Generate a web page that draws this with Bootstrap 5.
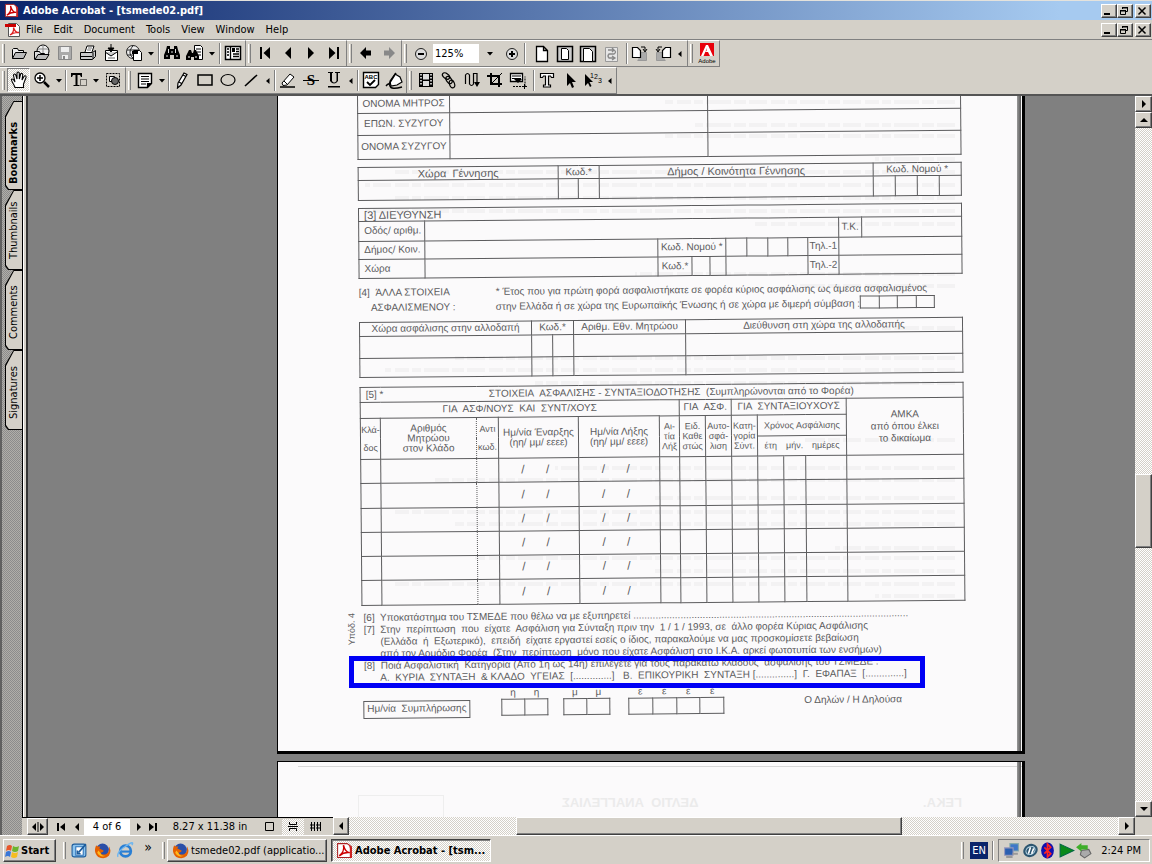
<!DOCTYPE html>
<html lang="en">
<head>
<meta charset="utf-8">
<meta name="viewport" content="width=device-width, initial-scale=1">
<title>Adobe Acrobat - [tsmede02.pdf]</title>
<link href="https://cdn.jsdelivr.net/npm/bootstrap@5.3.0/dist/css/bootstrap.min.css" rel="stylesheet">
<style>
:root{--face:#d4d0c8;--dark:#808080;--ink:#5c5c5e}
body{background:var(--face);color:#000;font:11px/14px "DejaVu Sans Condensed","DejaVu Sans",sans-serif;height:100vh;overflow:hidden;cursor:default}
button,input{font:inherit;color:inherit;border-radius:0}
button{background:none;border:0;padding:0}
svg{display:block;flex:none}
.ico{width:18px;height:18px}
.raised{background:var(--face);border:1px solid;border-color:#fff #404040 #404040 #fff;box-shadow:inset -1px -1px var(--dark)}
.checker{background:repeating-conic-gradient(#fff 0 25%,var(--face) 0 50%) 0 0/2px 2px}
.titlebar{flex:none;height:20px;background:linear-gradient(90deg,#0a246a,#a6caf0 92%);border-top:1px solid #e4e2dc;color:#fff;font-weight:bold}
.menubar{flex:none;height:20px;border-bottom:1px solid var(--dark)}
.menubar a{color:#000;text-decoration:none;margin-right:11px}
.winbtn{width:16px;height:14px}
.winbtn.close-btn{margin-left:2px;margin-right:-3px}
.toolrow{flex:none;height:27px}
.toolrow + .toolrow{height:29px;border-bottom:2px solid #555}
.toolrow + .toolrow .drop{width:11px}
.tgroup{border-right:1px solid var(--dark);border-bottom:1px solid var(--dark);border-top:1px solid #fff;padding-right:1px}
.grip{width:3px;margin:3px 2px 3px 2px;border-left:1px solid #fff;border-right:1px solid var(--dark)}
.sep{width:2px;margin:2px 0 2px 1px;border-left:1px solid var(--dark);border-right:1px solid #fff}
.tbtn{width:23px;height:24px;display:flex;align-items:center;justify-content:center}
.tbtn.pressed{border:1px solid;border-color:var(--dark) #fff #fff var(--dark)}
.drop{width:12px;display:flex;align-items:center;justify-content:center}
.drop.wide{width:20px}
.zoombox{width:46px;height:19px;border:0;background:#fff;padding:0 2px;margin:0 1px}
.navpane{width:22px;border-left:2px solid #606060;background:repeating-conic-gradient(#b0aea9 0 25%,#8c8c8c 0 50%) 0 0/2px 2px;padding:5px 0 0 3px}
.navtab{background:#000;position:relative;z-index:0;width:17px;height:80px;flex:none;writing-mode:vertical-rl;transform:rotate(180deg);clip-path:polygon(0 0,82% 0,100% 4px,100% calc(100% - 15px),50% 100%,0 100%);text-align:left;padding:11px 0 0 0;line-height:14px}
.navtab::before{content:"";position:absolute;inset:1px 1px 1px 0;background:var(--face);clip-path:inherit;z-index:-1}
.navtab.active{height:89px;font-weight:bold;padding-top:6px}
.splitter{width:6px;border-left:1px solid #000;border-right:2px solid #333;background:linear-gradient(90deg,#fff 1px,var(--face) 1px)}
.viewer{background:#808080;overflow:hidden}
.sheet{margin-left:22.5%;width:748px;border:solid #000;border-width:0 3px 3px 1px;background:#fbfafb;position:relative}
.sheet::after{content:"";position:absolute;top:0;bottom:0;right:1px;width:4px;background:linear-gradient(90deg,#999,#555)}
.bleed{position:absolute;left:80px;top:0}
.scan{margin-left:79px;width:605px;height:655px;transform:rotate(-.5deg);transform-origin:0 0;font:10px/15px "Liberation Sans",sans-serif;color:var(--ink);position:relative}
.scan table{width:604px;table-layout:fixed;border-collapse:collapse}
.scan td,.scan th{border:1px solid var(--ink);padding:0;font-weight:normal;text-align:center;line-height:10px;white-space:nowrap;overflow:visible}
.scan .lft{text-align:left;padding-left:5px}
.scan .big{font-size:11px}
.scan .date{font-size:12px;padding-right:7px}
.scan .tight{line-height:10px;font-size:9px}
.scan .two{line-height:18px;font-size:9px}
.scan .dotr{border-right:1px dotted var(--ink)}
.scan .dotl{border-left:1px dotted var(--ink)}
.notes{white-space:pre;line-height:12px}
.boxes td{height:16px}
.mark-box{position:absolute;left:71px;top:560px;width:576px;height:32px;border:5px solid #0000f5}
.margin-note{position:absolute;left:-15px;top:517px;writing-mode:vertical-rl;transform:rotate(180deg);font-size:9px;line-height:10px}
.ghost{color:#ebebeb;font:bold 13px/16px "Liberation Sans",sans-serif}
.flip{transform:scaleX(-1)}
.sbv{width:17px}
.sbtn{width:17px;height:16px;display:flex;align-items:center;justify-content:center}
.statusbar{height:18px}
.pagebox{width:46px;height:16px;border:0;background:#fff;padding:0;text-align:center}
.stbtn{width:22px;display:flex;align-items:center;justify-content:center}
.taskbar{flex:none;height:29px;border-top:1px solid #fff;padding:3px 2px 2px 3px}
.startbtn{width:53px;height:23px;padding-left:1px}
.taskbtn{width:160px;height:23px;padding:0 0 0 4px}
.taskbtn svg{margin-right:2px}
.taskbtn.sunk{border-color:#404040 #fff #fff #404040;box-shadow:inset 1px 1px var(--dark);background:repeating-conic-gradient(#fff 0 25%,var(--face) 0 50%) 0 0/2px 2px;font-weight:bold}
.tray{border:1px solid;border-color:var(--dark) #fff #fff var(--dark);height:23px}
.lang{background:#0a246a;color:#fff;width:18px;height:17px;line-height:17px}
</style>
</head>
<body class="d-flex flex-column">

<svg width="0" height="0" class="position-absolute" aria-hidden="true">
<defs>
<symbol id="pdf" viewBox="0 0 16 16"><path fill="#fff" stroke="#555" d="M3.5 1.5h8l3 3v10h-11z"/><path fill="#c00" d="M0 2h11v3H0z"/><path fill="none" stroke="#d22" stroke-width="1.3" d="M5 13c3-2 4-5 3.500-7.500C10 10 12 11 14 10.500 11 10 8 10.500 5 13"/></symbol>
<symbol id="acro" viewBox="0 0 16 16"><path fill="#fff" stroke="#a22" d="M1.500 1.500h9l4 3v10h-13z"/><path fill="#c22" d="M12 2l3 3v10h-2V6z"/><path fill="none" stroke="#c00" stroke-width="1.400" d="M3 13C6 11 8 7 7 3c1 4 3 7 6 7-4-.5-7 .5-10 3"/></symbol>
<symbol id="open" viewBox="0 0 18 18"><path fill="#eee" stroke="#000" d="M2.500 14.500v-9l1-1h4l1 2h5v2"/><path fill="#bbb" stroke="#000" d="M2.500 14.500l3-6h11l-3 6z"/></symbol>
<symbol id="openweb" viewBox="0 0 18 18"><circle cx="10" cy="7" r="6" fill="#eee" stroke="#000"/><path d="M5 5h10M10 1v12" stroke="#888"/><path fill="#ddd" stroke="#000" d="M1.500 15.500v-8h5l1 2h4v2"/><path fill="#bbb" stroke="#000" d="M2 15.500l3-5h11l-3 5z"/></symbol>
<symbol id="save" viewBox="0 0 18 18"><path fill="#aaa" stroke="#888" d="M2.500 2.500h13v13h-13z"/><path fill="#eee" d="M5 3h8v5H5zM6 11h6v4H6z"/><path fill="#888" d="M7 12h2v3H7z"/></symbol>
<symbol id="print" viewBox="0 0 18 18"><path fill="#fff" stroke="#000" d="M6 8l2-6h7l-2 6"/><path stroke="#777" d="M9 4h4M8 6h4"/><path fill="#ccc" stroke="#000" d="M1.500 8.500h12l3-2v6l-3 3h-12z"/><path stroke="#000" d="M2 12.500h11M14 9v6"/></symbol>
<symbol id="mail" viewBox="0 0 18 18"><path fill="#fff" stroke="#000" d="M3.500 6.500h12v10h-12z"/><path fill="#ccc" stroke="#000" d="M3 8l6 4 6-4"/><path d="M9 0v6M6 4l3 4 3-4z" stroke="#000"/><path stroke="#666" d="M6 14h7"/></symbol>
<symbol id="webpdf" viewBox="0 0 18 18"><circle cx="8" cy="8" r="6.500" fill="#eee" stroke="#222"/><path fill="none" stroke="#222" d="M2 6h12M2 11h8M8 2c-4 4-4 9 0 12"/><path fill="#fff" stroke="#000" d="M8.500 6.500h6l2 2v8h-8z"/><path d="M7 7h6v3H7z"/></symbol>
<symbol id="bino" viewBox="0 0 18 18"><path d="M4 2h3v3h4V2h3l1 4 2 5v4h-6v-4H7v4H1v-4l2-5z"/><path stroke="#ddd" d="M3 12h2M13 12h2M5.500 5v4M12.500 5v4M8 8h2"/></symbol>
<symbol id="binodoc" viewBox="0 0 18 18"><path fill="#fff" stroke="#000" d="M8.500 1.500h6l2 2v12h-8z"/><path stroke="#000" d="M10 5h5M11 8h4M12 11h3"/><path d="M3 6h2l1 3h1l1-3h2l3 6v4H8v-3H5v3H0v-4z"/><path stroke="#fff" d="M2 13h2M9 13h2"/></symbol>
<symbol id="navp" viewBox="0 0 18 18"><path fill="#fff" stroke="#000" stroke-width="1.500" d="M1.500 2.500h15v13h-15z"/><path stroke="#000" stroke-width="1.300" d="M6.500 3v12M3 5h2M3 8h2M3 11h2M9 10h6M9 12.500h6M12 5h3M12 7.500h3"/><path d="M8 4h3v4H8z"/></symbol>
<symbol id="first" viewBox="0 0 18 18"><path d="M4 3h2v12H4zM14 3v12L7.500 9z"/></symbol>
<symbol id="prev" viewBox="0 0 18 18"><path d="M12 3v12L6 9z"/></symbol>
<symbol id="next" viewBox="0 0 18 18"><path d="M6 3v12l6-6z"/></symbol>
<symbol id="last" viewBox="0 0 18 18"><path d="M4 3v12l6.500-6zM12 3h2v12h-2z"/></symbol>
<symbol id="back" viewBox="0 0 18 18"><path d="M3 9l6-6v3.500h5v5H9V15z"/></symbol>
<symbol id="minus" viewBox="0 0 18 18"><circle cx="9" cy="9" r="5.500" fill="#ddd" stroke="#222"/><path d="M6 8h6v2H6z"/></symbol>
<symbol id="plus" viewBox="0 0 18 18"><circle cx="9" cy="9" r="5.500" fill="#ddd" stroke="#222"/><path d="M6 8h6v2H6zM8 6h2v6H8z"/></symbol>
<symbol id="page1" viewBox="0 0 18 18"><path fill="#fff" stroke="#000" stroke-width="1.300" d="M3.500 1.500h7l4 4v11h-11zM10.500 1.500v4h4"/></symbol>
<symbol id="page2" viewBox="0 0 18 18"><path fill="#ccc" stroke="#000" stroke-width="1.500" d="M1.500 1.500h15v15h-15z"/><path fill="#fff" stroke="#000" d="M5.500 3.500h5l2 2v9h-7z"/></symbol>
<symbol id="page3" viewBox="0 0 18 18"><path fill="#ccc" stroke="#000" stroke-width="1.500" d="M1.500 1.500h15v15h-15z"/><path fill="#fff" stroke="#000" d="M4.500 3.500h6l3 3v10h-9z"/></symbol>
<symbol id="page4" viewBox="0 0 18 18"><path fill="#e6e6e6" stroke="#999" d="M3.500 2.500h12v14h-12z"/><path fill="none" stroke="#888" stroke-width="1.300" d="M6 5h6q3 2 0 4H7q-2 2 0 4h5M10 11l3 2-3 2M10 3l2 2-2 2"/></symbol>
<symbol id="rot" viewBox="0 0 18 18"><path fill="#aaa" stroke="#999" d="M9.500 7.500h6v8h-9"/><path fill="#fff" stroke="#000" stroke-width="1.200" d="M1.500 2.500h5l3 3v7h-8z"/><path fill="none" stroke="#000" d="M10 2h4v4M12 4l2 3 2-3"/></symbol>
<symbol id="adobe" viewBox="0 0 20 22"><path fill="#e8000b" d="M3 1h14v13H3z"/><path fill="#fff" d="M9 3h2l5 11h-3l-2-4H8l1.500-1L10 6l-3.500 8H4z"/><text x="10" y="21" text-anchor="middle" font-family="Liberation Sans" font-size="6">Adobe</text></symbol>
<symbol id="dn" viewBox="0 0 6 4"><path d="M0 0h6L3 3.500z"/></symbol>
<symbol id="lt" viewBox="0 0 4 6"><path d="M3.500 0v6L0 3z"/></symbol>
<symbol id="hand" viewBox="0 0 18 18"><path fill="#fff" stroke="#000" stroke-width="1.100" d="M5 16.500C4 13 1 10 1.500 8.500S4 9 5 11L3.500 4.500c0-2 2-2 2.500 0L7 8V2.500c0-2 2.200-2 2.300 0V8l1.200-4.500c.5-2 2.500-1 2.200.5L12 9l2-3.500c1-1.500 2.500-.5 2 1L13.500 13v3.500z"/></symbol>
<symbol id="zoomin" viewBox="0 0 18 18"><circle cx="7" cy="7" r="5" fill="#fff" stroke="#000" stroke-width="1.300"/><path stroke="#000" stroke-width="1.500" d="M4 7h6M7 4v6"/><path stroke="#000" stroke-width="2.500" d="M11 11l5 5"/></symbol>
<symbol id="tsel" viewBox="0 0 18 18"><path d="M1 2h11v4h-1l-1-2H7.500v10h2v1H3.500v-1h2V4H3L2 6H1z"/><path fill="none" stroke="#000" stroke-dasharray="1 1" d="M10.500 8.500h6v6h-6z"/></symbol>
<symbol id="snap" viewBox="0 0 18 18"><path fill="none" stroke="#000" stroke-dasharray="2 1" d="M2.500 2.500h13v13h-13z"/><path fill="#fff" stroke="#000" d="M5.500 5.500h5v5h-5z"/><circle cx="11" cy="10" r="3.500" fill="#666" stroke="#000"/></symbol>
<symbol id="note" viewBox="0 0 18 18"><path fill="#fff" stroke="#000" stroke-width="1.400" d="M2.500 2.500h13v10l-4 4h-9z"/><path stroke="#000" stroke-width="1.200" d="M5 5.500h8M5 8h8M5 10.500h8M5 13h5M11.500 16v-3.500h4"/></symbol>
<symbol id="pencil" viewBox="0 0 18 18"><path fill="#fff" stroke="#000" stroke-width="1.200" d="M5 12l6-10 3 1.500L8 14l-3.500 3zM6 11l2.500 1.500M10 4l3 1.500"/></symbol>
<symbol id="rect" viewBox="0 0 18 18"><path fill="none" stroke="#000" stroke-width="1.500" d="M2 4h14v10H2z"/></symbol>
<symbol id="oval" viewBox="0 0 18 18"><ellipse cx="9" cy="9" rx="7" ry="5.500" fill="none" stroke="#000" stroke-width="1.200"/></symbol>
<symbol id="line" viewBox="0 0 18 18"><path stroke="#000" stroke-width="1.600" d="M3 15L15 4"/></symbol>
<symbol id="high" viewBox="0 0 18 18"><path fill="#fff" stroke="#000" d="M3 12l8-9 4 3-7 8-4 .5zM5 10l3 3"/><path stroke="#000" stroke-width="1.500" d="M1 16h15"/></symbol>
<symbol id="strike" viewBox="0 0 18 18"><text x="9" y="14" text-anchor="middle" font-family="Liberation Serif" font-weight="bold" font-size="15">S</text><path stroke="#000" d="M1 9.500h16"/></symbol>
<symbol id="under" viewBox="0 0 18 18"><path d="M3 1h5v1H7v8q2 3 4.500 0V2H10V1h5v1h-2v8q-4 5-8 0V2H3zM3 15h12v1.500H3z"/></symbol>
<symbol id="abc" viewBox="0 0 18 18"><path fill="#fff" stroke="#000" stroke-width="1.400" d="M1.500 1.500h15v12l-3 3h-12z"/><text x="9" y="8" text-anchor="middle" font-family="Liberation Sans" font-weight="bold" font-size="6">ABC</text><path fill="none" stroke="#000" stroke-width="1.800" d="M5 11l3 3 5-5"/></symbol>
<symbol id="sign" viewBox="0 0 18 18"><path fill="#fff" stroke="#000" stroke-width="1.200" d="M5 10l5-7 5 3 2 5-5 3-6 1z"/><path fill="none" stroke="#000" stroke-width="1.400" d="M11 2L4 13M1 15q3-4 4 0t12 1"/></symbol>
<symbol id="film" viewBox="0 0 18 18"><path d="M2 2h14v14H2z"/><path fill="#ddd" d="M6 3h6v5.500H6zM6 10h6v5H6z"/><path stroke="#fff" stroke-width="1.500" stroke-dasharray="1.500 1.500" d="M4 3v12M14 3v12"/></symbol>
<symbol id="link" viewBox="0 0 18 18"><g fill="none" stroke="#000" stroke-width="1.200"><ellipse cx="6" cy="5" rx="4" ry="2.500" transform="rotate(35 6 5)"/><ellipse cx="9" cy="9" rx="4" ry="2.500" transform="rotate(55 9 9)"/><ellipse cx="12" cy="13" rx="4" ry="2.500" transform="rotate(70 12 13)"/></g></symbol>
<symbol id="art" viewBox="0 0 18 18"><path fill="none" stroke="#000" stroke-width="1.200" d="M2.500 13V4q2-3 4 0v9q2 3 4 0V2.500h3.500V12"/><path d="M11 11h6l-3 5z"/></symbol>
<symbol id="crop" viewBox="0 0 18 18"><path fill="none" stroke="#000" stroke-width="2" d="M5 2v11h11M1 5h12v11"/><path stroke="#000" d="M5 13L16 2"/></symbol>
<symbol id="formt" viewBox="0 0 18 18"><path fill="#fff" stroke="#000" stroke-width="1.300" d="M1.500 2.500h12v8h-12z"/><path stroke="#000" d="M3 5h9M3 7.500h9"/><path d="M5 8h8l-4 4z"/><path fill="none" stroke="#000" stroke-dasharray="2 1" d="M4 15.500h12v-10"/><path stroke="#000" d="M13 15.500h5M15.500 13v5"/></symbol>
<symbol id="ttool" viewBox="0 0 18 18"><path fill="#fff" stroke="#000" stroke-width="1.200" d="M2.500 2.500h13v4h-2l-1-1.500h-2v9h2v2h-7v-2h2V5h-2l-1 1.500h-2z"/></symbol>
<symbol id="arrow" viewBox="0 0 18 18"><path d="M6 2v13l3-3 2 5 2-1-2-5h4z"/></symbol>
<symbol id="a123" viewBox="0 0 18 18"><path d="M1 3v12l3-3 2 4 1.500-1-2-4H9z"/><text x="6" y="7" font-family="Liberation Sans" font-size="7">1</text><text x="10" y="8" font-family="Liberation Sans" font-size="7">2</text><text x="14" y="12" font-family="Liberation Sans" font-size="7">3</text></symbol>
<symbol id="min" viewBox="0 0 12 10"><path d="M2 7h6v2H2z"/></symbol>
<symbol id="rest" viewBox="0 0 12 10"><path fill="none" stroke="#000" d="M4.500 3V1.500h5v4H8M2.500 4.500h5v4h-5z"/><path d="M4 1h6v1.500H4zM2 4h6v1.500H2z"/></symbol>
<symbol id="cls" viewBox="0 0 12 10"><path stroke="#000" stroke-width="1.500" d="M2.500 1.500l7 7M9.500 1.500l-7 7"/></symbol>
<symbol id="win" viewBox="0 0 16 16"><path fill="#e8552a" d="M2 3q3-2 5 0L6 8Q4 6 1 8z"/><path fill="#6cb52d" d="M8 3q3 2 6 0l-1 5q-3 2-6 0z"/><path fill="#3a78d8" d="M1 9q3-2 5 0l-1 5q-2-2-5 0z"/><path fill="#f5bd1f" d="M7 9q3 2 6 0l-1 5q-3 2-6 0z"/></symbol>
<symbol id="ff" viewBox="0 0 16 16"><circle cx="8" cy="7.500" r="6" fill="#2b4fa8"/><path fill="#e66000" d="M2 3q-3 7 2 11 6 3 10-1 3-5 0-9 1 5-2 7-4 2-6-1 3 0 3-2l-4-2 1-2Q3 5 2 3"/><path fill="#ffb81c" d="M3 10q3 5 8 3-4 0-5-3l-2-2z"/></symbol>
<symbol id="ie" viewBox="0 0 16 16"><circle cx="8" cy="8.500" r="5" fill="none" stroke="#2a7fd4" stroke-width="2.600"/><path stroke="#2a7fd4" stroke-width="2" d="M4 9h9"/><path fill="none" stroke="#6fb6f0" stroke-width="1.300" d="M1 14Q-1 10 8 4t6-1"/></symbol>
<symbol id="desk" viewBox="0 0 16 16"><rect x="1" y="2" width="13" height="12" rx="2" fill="#8cc4ee" stroke="#1c5c9c"/><path fill="#fff" stroke="#2a70b8" d="M4.500 4.500h7v8h-7z"/><path stroke="#1c5c9c" stroke-width="1.500" d="M7 10l7-8M6 8v3h3" fill="none"/></symbol>
<symbol id="net" viewBox="0 0 16 16"><path fill="#3f78c8" stroke="#8aa" d="M6.500 1.500h8v7h-8z"/><path fill="#2b5fb0" stroke="#99b" d="M1.500 5.500h8v7h-8z"/><path fill="#999" d="M3 13h6v2H3zM9 10h5v2H9z"/></symbol>
<symbol id="quick" viewBox="0 0 16 16"><ellipse cx="8" cy="8" rx="7" ry="6" fill="#2d5670" transform="rotate(-30 8 8)"/><ellipse cx="8" cy="8" rx="4.500" ry="3.500" fill="none" stroke="#b8d8e8" transform="rotate(-30 8 8)"/><path stroke="#fff" stroke-width="1.500" d="M6 11l2-6M9 11l2-5"/></symbol>
<symbol id="bt" viewBox="0 0 16 16"><ellipse cx="8" cy="8" rx="6" ry="7.500" fill="#1010b0"/><path fill="none" stroke="#f22" stroke-width="1.600" d="M5 5l6 6-3 3V2l3 3-6 6"/></symbol>
<symbol id="play" viewBox="0 0 16 16"><path fill="#0a8a1a" stroke="#064" d="M2 2l13 6-13 6z"/></symbol>
<symbol id="eject" viewBox="0 0 16 16"><path fill="#aaa" stroke="#666" d="M6 8l7-1 2 4-6 4-4-3z"/><path fill="#3fae2a" d="M1 5l5-4v2h6v4H6v2z"/></symbol>
</defs>
</svg>

<header class="titlebar d-flex align-items-center px-1">
  <svg width="15" height="15"><use href="#acro"/></svg>
  <span class="ms-1 flex-grow-1 text-nowrap">Adobe Acrobat - [tsmede02.pdf]</span>
  <button class="winbtn raised" aria-label="Minimize"><svg width="12" height="10"><use href="#min"/></svg></button>
  <button class="winbtn raised" aria-label="Restore"><svg width="12" height="10"><use href="#rest"/></svg></button>
  <button class="winbtn close-btn raised" aria-label="Close"><svg width="12" height="10"><use href="#cls"/></svg></button>
</header>

<nav class="menubar d-flex align-items-center px-1" aria-label="Menu">
  <svg width="18" height="16"><use href="#pdf"/></svg>
  <div class="d-flex flex-grow-1 ms-1"><a href="#">File</a><a href="#">Edit</a><a href="#">Document</a><a href="#">Tools</a><a href="#">View</a><a href="#">Window</a><a href="#">Help</a></div>
  <button class="winbtn raised" aria-label="Minimize document"><svg width="12" height="10"><use href="#min"/></svg></button>
  <button class="winbtn raised" aria-label="Restore document"><svg width="12" height="10"><use href="#rest"/></svg></button>
  <button class="winbtn close-btn raised" aria-label="Close document"><svg width="12" height="10"><use href="#cls"/></svg></button>
</nav>

<div class="toolrow d-flex" role="toolbar" aria-label="File and view">
  <div class="tgroup d-flex"><span class="grip"></span>
    <button class="tbtn" aria-label="Open"><svg class="ico"><use href="#open"/></svg></button>
    <button class="tbtn" aria-label="Open web page"><svg class="ico"><use href="#openweb"/></svg></button>
    <button class="tbtn" aria-label="Save" disabled><svg class="ico"><use href="#save"/></svg></button>
    <button class="tbtn" aria-label="Print"><svg class="ico"><use href="#print"/></svg></button>
    <button class="tbtn" aria-label="E-mail"><svg class="ico"><use href="#mail"/></svg></button>
    <button class="tbtn" aria-label="Convert"><svg class="ico"><use href="#webpdf"/></svg></button>
    <button class="drop" aria-label="More convert"><svg width="6" height="4"><use href="#dn"/></svg></button>
    <span class="sep"></span>
    <button class="tbtn" aria-label="Find"><svg class="ico"><use href="#bino"/></svg></button>
    <button class="tbtn" aria-label="Search"><svg class="ico"><use href="#binodoc"/></svg></button>
    <button class="drop" aria-label="More search"><svg width="6" height="4"><use href="#dn"/></svg></button>
    <span class="sep"></span>
    <button class="tbtn" aria-label="Navigation pane"><svg class="ico"><use href="#navp"/></svg></button>
  </div>
  <div class="tgroup d-flex"><span class="grip"></span>
    <button class="tbtn" aria-label="First page"><svg class="ico"><use href="#first"/></svg></button>
    <button class="tbtn" aria-label="Previous page"><svg class="ico"><use href="#prev"/></svg></button>
    <button class="tbtn" aria-label="Next page"><svg class="ico"><use href="#next"/></svg></button>
    <button class="tbtn" aria-label="Last page"><svg class="ico"><use href="#last"/></svg></button>
  </div>
  <div class="tgroup d-flex"><span class="grip"></span>
    <button class="tbtn" aria-label="Previous view"><svg class="ico"><use href="#back"/></svg></button>
    <button class="tbtn" aria-label="Next view" disabled><svg class="ico flip" fill="#888"><use href="#back"/></svg></button>
  </div>
  <div class="tgroup d-flex align-items-center"><span class="grip align-self-stretch"></span>
    <button class="tbtn" aria-label="Zoom out"><svg class="ico"><use href="#minus"/></svg></button>
    <input class="zoombox" type="text" value="125%" aria-label="Zoom">
    <button class="drop wide" aria-label="Zoom levels"><svg width="6" height="4"><use href="#dn"/></svg></button>
    <button class="tbtn" aria-label="Zoom in"><svg class="ico"><use href="#plus"/></svg></button>
    <span class="sep align-self-stretch me-1"></span>
    <button class="tbtn" aria-label="Actual size"><svg class="ico"><use href="#page1"/></svg></button>
    <button class="tbtn" aria-label="Fit in window"><svg class="ico"><use href="#page2"/></svg></button>
    <button class="tbtn" aria-label="Fit width"><svg class="ico"><use href="#page3"/></svg></button>
    <button class="tbtn" aria-label="Reflow" disabled><svg class="ico"><use href="#page4"/></svg></button>
    <span class="sep align-self-stretch ms-1"></span>
    <button class="tbtn" aria-label="Rotate clockwise"><svg class="ico"><use href="#rot"/></svg></button>
    <button class="tbtn" aria-label="Rotate counterclockwise"><svg class="ico flip"><use href="#rot"/></svg></button>
    <button class="drop" aria-label="Collapse view tools"><svg width="4" height="6"><use href="#lt"/></svg></button>
  </div>
  <div class="tgroup d-flex"><span class="grip"></span>
    <button class="tbtn" aria-label="Adobe on the Web"><svg width="20" height="22"><use href="#adobe"/></svg></button>
  </div>
</div>

<div class="toolrow d-flex" role="toolbar" aria-label="Editing">
  <div class="tgroup d-flex"><span class="grip"></span>
    <button class="tbtn pressed checker" aria-label="Hand"><svg class="ico"><use href="#hand"/></svg></button>
    <button class="tbtn" aria-label="Zoom"><svg class="ico"><use href="#zoomin"/></svg></button>
    <button class="drop" aria-label="More zoom"><svg width="6" height="4"><use href="#dn"/></svg></button>
    <span class="sep"></span>
    <button class="tbtn" aria-label="Select text"><svg class="ico"><use href="#tsel"/></svg></button>
    <button class="drop" aria-label="More select"><svg width="6" height="4"><use href="#dn"/></svg></button>
    <button class="tbtn" aria-label="Select graphic"><svg class="ico"><use href="#snap"/></svg></button>
  </div>
  <div class="tgroup d-flex"><span class="grip"></span>
    <button class="tbtn" aria-label="Note"><svg class="ico"><use href="#note"/></svg></button>
    <button class="drop" aria-label="More notes"><svg width="6" height="4"><use href="#dn"/></svg></button>
    <span class="sep"></span>
    <button class="tbtn" aria-label="Pencil"><svg class="ico"><use href="#pencil"/></svg></button>
    <button class="tbtn" aria-label="Square"><svg class="ico"><use href="#rect"/></svg></button>
    <button class="tbtn" aria-label="Circle"><svg class="ico"><use href="#oval"/></svg></button>
    <button class="tbtn" aria-label="Line"><svg class="ico"><use href="#line"/></svg></button>
    <button class="drop" aria-label="Collapse shapes"><svg width="4" height="6"><use href="#lt"/></svg></button>
    <span class="sep"></span>
    <button class="tbtn" aria-label="Highlight"><svg class="ico"><use href="#high"/></svg></button>
    <button class="tbtn" aria-label="Strikeout"><svg class="ico"><use href="#strike"/></svg></button>
    <button class="tbtn" aria-label="Underline"><svg class="ico"><use href="#under"/></svg></button>
    <button class="drop" aria-label="Collapse markup"><svg width="4" height="6"><use href="#lt"/></svg></button>
    <span class="sep"></span>
    <button class="tbtn" aria-label="Spell check"><svg class="ico"><use href="#abc"/></svg></button>
    <button class="tbtn" aria-label="Sign"><svg class="ico"><use href="#sign"/></svg></button>
  </div>
  <div class="tgroup d-flex"><span class="grip"></span>
    <button class="tbtn" aria-label="Movie"><svg class="ico"><use href="#film"/></svg></button>
    <button class="tbtn" aria-label="Link"><svg class="ico"><use href="#link"/></svg></button>
    <button class="tbtn" aria-label="Article"><svg class="ico"><use href="#art"/></svg></button>
    <button class="tbtn" aria-label="Crop"><svg class="ico"><use href="#crop"/></svg></button>
    <button class="tbtn" aria-label="Form"><svg class="ico"><use href="#formt"/></svg></button>
    <span class="sep ms-1"></span>
    <button class="tbtn" aria-label="TouchUp text"><svg class="ico"><use href="#ttool"/></svg></button>
    <button class="tbtn" aria-label="TouchUp object"><svg class="ico"><use href="#arrow"/></svg></button>
    <button class="tbtn" aria-label="TouchUp order"><svg class="ico"><use href="#a123"/></svg></button>
    <button class="drop" aria-label="Collapse TouchUp"><svg width="4" height="6"><use href="#lt"/></svg></button>
  </div>
</div>

<main class="d-flex flex-grow-1" style="min-height:0">
  <div class="navpane d-flex flex-column">
    <button class="navtab active">Bookmarks</button>
    <button class="navtab">Thumbnails</button>
    <button class="navtab">Comments</button>
    <button class="navtab">Signatures</button>
  </div>
  <div class="d-flex flex-column flex-grow-1" style="min-width:0">
    <div class="d-flex flex-grow-1" style="min-height:0">
      <div class="splitter"></div>
      <div class="viewer flex-grow-1">
        <section class="sheet">
          <svg class="bleed flip" width="605" height="600" stroke="#f3f2f3" stroke-width="4" stroke-dasharray="18 3 12 3 25 3 9 3 14 4" aria-hidden="true">
            <path d="M8 6h290M8 29h260M8 40h290M8 63h80M8 76h560M8 89h590M8 102h560M8 115h590M8 128h200M8 178h320M8 190h160M8 232h90M8 262h500M8 274h570M8 287h420M8 344h150M8 372h400M8 384h520M8 402h300M8 416h560M8 428h500M8 452h120M8 462h480M8 475h300M8 488h560M8 500h80" fill="none"/>
          </svg>
          <div class="scan">
            <table>
              <colgroup><col style="width:92px"><col style="width:258px"><col></colgroup>
              <tr style="height:17px"><td class="border-top-0">ΟΝΟΜΑ ΜΗΤΡΟΣ</td><td class="border-top-0"></td><td class="border-top-0"></td></tr>
              <tr style="height:22px"><td>ΕΠΩΝ. ΣΥΖΥΓΟΥ</td><td></td><td></td></tr>
              <tr style="height:24px"><td>ΟΝΟΜΑ ΣΥΖΥΓΟΥ</td><td></td><td></td></tr>
            </table>
            <table style="margin-top:7px">
              <colgroup><col style="width:200px"><col style="width:20px"><col style="width:21px"><col style="width:274px"><col style="width:22px"><col style="width:22px"><col style="width:22px"><col></colgroup>
              <tr style="height:13px"><th class="big">Χώρα &nbsp;Γέννησης</th><th colspan="2">Κωδ.*</th><th class="big">Δήμος / Κοινότητα Γέννησης</th><th colspan="4">Κωδ. Νομού *</th></tr>
              <tr style="height:20px"><td></td><td></td><td></td><td></td><td></td><td></td><td></td><td></td></tr>
            </table>
            <table style="margin-top:7px">
              <colgroup><col style="width:66px"><col style="width:233px"><col style="width:34px"><col style="width:18px"><col style="width:16px"><col style="width:21px"><col style="width:21px"><col style="width:20px"><col style="width:20px"><col style="width:31px"><col style="width:23px"><col></colgroup>
              <tr style="height:13px"><th colspan="12" class="lft big">[3] ΔΙΕΥΘΥΝΣΗ</th></tr>
              <tr style="height:20px"><td class="lft">Οδός/ αριθμ.</td><td colspan="9"></td><td>Τ.Κ.</td><td></td></tr>
              <tr style="height:18px"><td class="lft">Δήμος/ Κοιν.</td><td></td><td colspan="3">Κωδ. Νομού *</td><td></td><td></td><td></td><td></td><td>Τηλ.-1</td><td colspan="2"></td></tr>
              <tr style="height:19px"><td class="lft">Χώρα</td><td></td><td>Κωδ.*</td><td></td><td></td><td colspan="4"></td><td>Τηλ.-2</td><td colspan="2"></td></tr>
            </table>
            <div class="d-flex" style="margin-top:6px">
              <div style="width:137px">[4] &nbsp;ΆΛΛΑ ΣΤΟΙΧΕΙΑ<br><span class="ms-2 ps-1">ΑΣΦΑΛΙΣΜΕΝΟΥ :</span></div>
              <div class="text-nowrap">* Έτος που για πρώτη φορά ασφαλιστήκατε σε φορέα κύριος ασφάλισης ως άμεσα ασφαλισμένος<br>
                <div class="d-flex">στην Ελλάδα ή σε χώρα της Ευρωπαϊκής Ένωσης ή σε χώρα με διμερή σύμβαση :
                  <table style="width:75px;height:13px"><tr><td></td><td></td><td></td><td></td></tr></table></div></div>
            </div>
            <table style="margin-top:7px">
              <colgroup><col style="width:172px"><col style="width:21px"><col style="width:21px"><col style="width:112px"><col></colgroup>
              <tr style="height:14px"><th>Χώρα ασφάλισης στην αλλοδαπή</th><th colspan="2">Κωδ.*</th><th>Αριθμ. Εθν. Μητρώου</th><th>Διεύθυνση στη χώρα της αλλοδαπής</th></tr>
              <tr style="height:22px"><td></td><td></td><td></td><td></td><td></td></tr>
              <tr style="height:19px"><td></td><td></td><td></td><td></td><td></td></tr>
            </table>
            <table style="margin-top:9px">
              <colgroup><col style="width:20px"><col style="width:96px"><col style="width:22px"><col style="width:80px"><col style="width:81px"><col style="width:20px"><col style="width:26px"><col style="width:26px"><col style="width:26px"><col style="width:26px"><col style="width:22px"><col style="width:41px"><col></colgroup>
              <tr style="height:15px"><th class="lft border-end-0">[5] *</th><th colspan="12" class="border-start-0">ΣΤΟΙΧΕΙΑ &nbsp;ΑΣΦΑΛΙΣΗΣ - ΣΥΝΤΑΞΙΟΔΟΤΗΣΗΣ &nbsp;(Συμπληρώνονται από το Φορέα)</th></tr>
              <tr style="height:16px"><th colspan="6">ΓΙΑ &nbsp;ΑΣΦ/ΝΟΥΣ &nbsp;ΚΑΙ &nbsp;ΣΥΝΤ/ΧΟΥΣ</th><th colspan="2">ΓΙΑ &nbsp;ΑΣΦ.</th><th colspan="4">ΓΙΑ &nbsp;ΣΥΝΤΑΞΙΟΥΧΟΥΣ</th><th rowspan="3" style="line-height:12px">ΑΜΚΑ<br>από όπου έλκει<br>το δικαίωμα</th></tr>
              <tr style="height:21px"><th rowspan="2" class="two">Κλά-<br>δος</th><th rowspan="2" class="dotr">Αριθμός<br>Μητρώου<br>στον Κλάδο</th><th rowspan="2" class="two dotl">Αντι<br>κωδ.</th><th rowspan="2">Ημ/νία Έναρξης<br>(ηη/ μμ/ εεεε)</th><th rowspan="2">Ημ/νία Λήξης<br>(ηη/ μμ/ εεεε)</th><th rowspan="2" class="tight">Αι-<br>τία<br>Λήξ</th><th rowspan="2" class="tight">Ειδ.<br>Καθε<br>στώς</th><th rowspan="2" class="tight">Αυτο-<br>σφά-<br>λιση</th><th rowspan="2" class="tight">Κατη-<br>γορία<br>Σύντ.</th><th colspan="3" class="tight">Χρόνος Ασφάλισης</th></tr>
              <tr style="height:20px"><th class="tight border-end-0">έτη</th><th class="tight border-start-0 border-end-0">μήν.</th><th class="tight border-start-0">ημέρες</th></tr>
              <tr style="height:24px"><td></td><td class="dotr"></td><td class="dotl"></td><td class="date">/ &emsp;&ensp;/</td><td class="date">/ &emsp;&ensp;/</td><td></td><td></td><td></td><td></td><td></td><td></td><td></td><td></td></tr>
              <tr style="height:25px"><td></td><td class="dotr"></td><td class="dotl"></td><td class="date">/ &emsp;&ensp;/</td><td class="date">/ &emsp;&ensp;/</td><td></td><td></td><td></td><td></td><td></td><td></td><td></td><td></td></tr>
              <tr style="height:24px"><td></td><td class="dotr"></td><td class="dotl"></td><td class="date">/ &emsp;&ensp;/</td><td class="date">/ &emsp;&ensp;/</td><td></td><td></td><td></td><td></td><td></td><td></td><td></td><td></td></tr>
              <tr style="height:24px"><td></td><td class="dotr"></td><td class="dotl"></td><td class="date">/ &emsp;&ensp;/</td><td class="date">/ &emsp;&ensp;/</td><td></td><td></td><td></td><td></td><td></td><td></td><td></td><td></td></tr>
              <tr style="height:24px"><td></td><td class="dotr"></td><td class="dotl"></td><td class="date">/ &emsp;&ensp;/</td><td class="date">/ &emsp;&ensp;/</td><td></td><td></td><td></td><td></td><td></td><td></td><td></td><td></td></tr>
              <tr style="height:25px"><td></td><td class="dotr"></td><td class="dotl"></td><td class="date">/ &emsp;&ensp;/</td><td class="date">/ &emsp;&ensp;/</td><td></td><td></td><td></td><td></td><td></td><td></td><td></td><td></td></tr>
            </table>
            <div class="notes" style="margin:6px 0 0 2px">[6]  Υποκατάστημα του ΤΣΜΕΔΕ που θέλω να με εξυπηρετεί ...................................................................................................
[7]  Στην  περίπτωση  που  είχατε  Ασφάλιση για Σύνταξη πριν την  1 / 1 / 1993, σε  άλλο φορέα Κύριας Ασφάλισης
      (Ελλάδα  ή  Εξωτερικό),  επειδή  είχατε εργαστεί εσείς ο ίδιος, παρακαλούμε να μας προσκομίσετε βεβαίωση
      από τον Αρμόδιο Φορέα  (Στην  περίπτωση  μόνο που είχατε Ασφάλιση στο Ι.Κ.Α. αρκεί φωτοτυπία των ενσήμων)
[8]  Ποιά Ασφαλιστική  Κατηγορία (Από 1η ως 14η) επιλέγετε για τους παρακάτω κλάδους  ασφάλισης του ΤΣΜΕΔΕ :
      Α.  ΚΥΡΙΑ  ΣΥΝΤΑΞΗ  &amp; ΚΛΑΔΟ  ΥΓΕΙΑΣ  [..............]   Β.  ΕΠΙΚΟΥΡΙΚΗ  ΣΥΝΤΑΞΗ [..............]  Γ.  ΕΦΑΠΑΞ  [..............]</div>
            <div class="d-flex boxes" style="margin:4px 0 0 1px">
              <div style="width:107px;height:18px;border:1px solid;margin-top:13px;line-height:13px" class="text-center text-nowrap">Ημ/νία &nbsp;Συμπλήρωσης</div>
              <div style="width:47px;margin-left:31px"><div class="d-flex justify-content-around" style="line-height:12px"><span>η</span><span>η</span></div><table class="w-100"><tr><td></td><td></td></tr></table></div>
              <div style="width:47px;margin-left:15px"><div class="d-flex justify-content-around" style="line-height:12px"><span>μ</span><span>μ</span></div><table class="w-100"><tr><td></td><td></td></tr></table></div>
              <div style="width:96px;margin-left:18px"><div class="d-flex justify-content-around" style="line-height:12px"><span>ε</span><span>ε</span><span>ε</span><span>ε</span></div><table class="w-100"><tr><td></td><td></td><td></td><td></td></tr></table></div>
              <div style="margin:8px 0 0 80px" class="text-nowrap">Ο Δηλών / Η Δηλούσα</div>
            </div>
            <div class="margin-note">Υπόδ. 4</div>
          </div>
          <div class="mark-box"></div>
        </section>
        <section class="sheet" style="margin-top:7px;border-top-width:1px">
          <div style="height:5px;border-bottom:1px solid #d8d8d8;margin-left:20px"></div>
          <div class="d-flex ghost" style="height:200px;padding:28px 60px 0 80px">
            <div style="width:86px;height:40px;border:1px solid #eee"></div>
            <div class="flip" style="margin-left:118px">ΔΕΛΤΙΟ &nbsp;ΑΝΑΓΓΕΛΙΑΣ</div>
            <div class="flip ms-auto">ΓΕΚΑ.</div>
          </div>
        </section>
      </div>
      <div class="sbv checker d-flex flex-column">
        <button class="sbtn raised" aria-label="Pane menu"><svg width="6" height="8" viewBox="0 0 6 8"><path d="M1 0v8l4-4z"/></svg></button>
        <button class="sbtn raised" aria-label="Scroll up"><svg width="8" height="5" viewBox="0 0 8 5"><path d="M4 0l4 4H0z"/></svg></button>
        <div style="flex:348 0 0"></div>
        <div class="raised" style="flex:72 0 0"></div>
        <div style="flex:254 0 0"></div>
        <button class="sbtn raised" aria-label="Scroll down"><svg width="8" height="5" viewBox="0 0 8 5"><path d="M0 0h8L4 4z"/></svg></button>
      </div>
    </div>
    <div class="statusbar d-flex">
      <div class="d-flex align-items-center" style="width:311px;border-top:1px solid #000;padding-left:5px">
        <button class="stbtn raised" style="width:21px;height:17px" aria-label="Toggle pane"><svg width="12" height="10" viewBox="0 0 12 10"><path d="M0 5l4-4v8zM12 5L8 1v8zM5.500 0h1v10h-1z"/></svg></button>
        <button class="stbtn ms-1" style="width:18px" aria-label="First page"><svg width="9" height="8" viewBox="0 0 9 8"><path d="M0 0h2v8H0zM8 0v8L3 4z"/></svg></button>
        <button class="stbtn" style="width:14px" aria-label="Previous page"><svg width="5" height="8" viewBox="0 0 5 8"><path d="M4 0v8L0 4z"/></svg></button>
        <input class="pagebox" type="text" value="4 of 6" aria-label="Page">
        <button class="stbtn" style="width:16px" aria-label="Next page"><svg width="5" height="8" viewBox="0 0 5 8"><path d="M1 0v8l4-4z"/></svg></button>
        <button class="stbtn" style="width:14px" aria-label="Last page"><svg width="9" height="8" viewBox="0 0 9 8"><path d="M0 0v8l5-4zM6 0h2v8H6z"/></svg></button>
        <span class="text-nowrap text-center" style="width:100px">8.27 x 11.38 in</span>
        <button class="stbtn" style="width:18px" aria-label="Single page"><svg width="9" height="9" viewBox="0 0 9 9"><path fill="none" stroke="#000" d="M.5.5h8v8h-8z"/></svg></button>
        <button class="stbtn checker ms-1" style="height:16px" aria-label="Continuous"><svg width="10" height="9" viewBox="0 0 10 9"><path fill="none" stroke="#000" d="M1.500 0v2.500h7V0M1.500 9V6.500h7V9M0 4.500h10"/></svg></button>
        <button class="stbtn" aria-label="Facing"><svg width="11" height="9" viewBox="0 0 11 9"><path fill="none" stroke="#000" d="M1.500 0v9M4.500 0v9M7.500 0v9M10.500 0v9M0 3h5M6 3h5M0 6h5M6 6h5"/></svg></button>
      </div>
      <div class="flex-grow-1 checker d-flex">
        <button class="sbtn raised h-100" style="width:16px" aria-label="Scroll left"><svg width="5" height="8" viewBox="0 0 5 8"><path d="M4 0v8L0 4z"/></svg></button>
        <div style="flex:167 0 0"></div>
        <div class="raised" style="flex:385 0 0"></div>
        <div style="flex:217 0 0"></div>
        <button class="sbtn raised h-100" aria-label="Scroll right"><svg width="6" height="8" viewBox="0 0 6 8"><path d="M1 0v8l4-4z"/></svg></button>
      </div>
      <div class="sbv"></div>
    </div>
  </div>
</main>

<footer class="taskbar d-flex align-items-center">
  <button class="startbtn raised d-flex align-items-center fw-bold text-nowrap"><svg width="16" height="16"><use href="#win"/></svg>Start</button>
  <span class="grip align-self-stretch" style="margin-left:7px"></span>
  <button class="stbtn" aria-label="Show desktop"><svg width="17" height="17"><use href="#desk"/></svg></button>
  <button class="stbtn" style="width:24px" aria-label="Firefox"><svg width="17" height="17"><use href="#ff"/></svg></button>
  <button class="stbtn" aria-label="Internet Explorer"><svg width="17" height="17"><use href="#ie"/></svg></button>
  <button class="stbtn pb-2" style="width:24px;font-size:14px" aria-label="More">»</button>
  <span class="grip align-self-stretch"></span>
  <button class="taskbtn raised d-flex align-items-center"><svg width="17" height="17"><use href="#ff"/></svg><span class="text-nowrap">tsmede02.pdf (applicatio...</span></button>
  <button class="taskbtn sunk raised d-flex align-items-center ms-1"><svg width="17" height="17"><use href="#acro"/></svg><span class="text-nowrap">Adobe Acrobat - [tsm...</span></button>
  <div class="flex-grow-1"></div>
  <span class="grip align-self-stretch"></span>
  <span class="lang text-center ms-1">EN</span>
  <span class="sep align-self-stretch mx-1"></span>
  <div class="tray d-flex align-items-center px-1" style="width:152px">
    <svg width="17" height="17"><use href="#net"/></svg><svg width="17" height="17" style="margin-left:2px"><use href="#quick"/></svg><svg width="17" height="17"><use href="#bt"/></svg><svg width="17" height="17" style="margin-left:2px"><use href="#play"/></svg><svg width="17" height="17"><use href="#eject"/></svg>
    <span class="ms-auto me-1 text-nowrap">2:24 PM</span>
  </div>
</footer>
<script src="https://cdn.jsdelivr.net/npm/bootstrap@5.3.0/dist/js/bootstrap.bundle.min.js"></script>
</body>
</html>
